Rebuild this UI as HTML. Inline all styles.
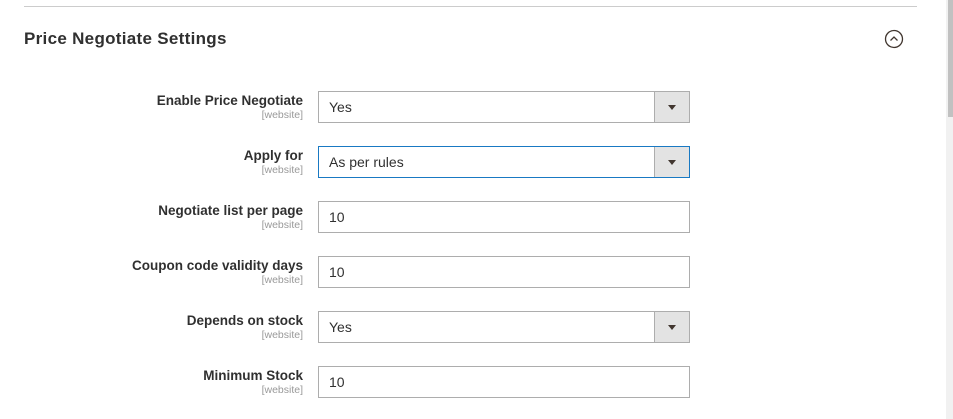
<!DOCTYPE html><html><head><style>
body{margin:0;width:953px;height:419px;background:#fff;font-family:"Liberation Sans",sans-serif;position:relative;overflow:hidden}
.hr{position:absolute;left:24px;top:6px;width:893px;height:1px;background:#ccc}
.sb{position:absolute;left:946px;top:0;width:7px;height:419px;background:#f1f1f1}
.th{position:absolute;left:948px;top:0;width:5px;height:117px;background:#c1c1c1}
h2{position:absolute;left:24px;top:29px;margin:0;font-size:17px;font-weight:bold;color:#303030;letter-spacing:.3px}
.lab{position:absolute;right:650px;text-align:right;color:#303030;font-size:13.5px;font-weight:bold}
.lab small{display:block;font-size:10.5px;color:#999;font-weight:normal;margin-top:1px}
.f{position:absolute;left:318px;height:30px;border:1px solid #adadad;font-size:14px;color:#303030;line-height:30px;padding-left:10px;width:360px}
.f.sel .btn{position:absolute;right:0;top:0;width:34px;height:30px;background:#e3e3e3;border-left:1px solid #adadad}
.btn:after{content:"";position:absolute;left:13px;top:13px;border-left:4px solid transparent;border-right:4px solid transparent;border-top:5px solid #41362f}
.foc{border-color:#1979c3}
</style></head><body>
<div class="hr"></div><div class="sb"></div><div class="th"></div>
<h2>Price Negotiate Settings</h2>
<svg style="position:absolute;left:884px;top:29px" width="20" height="20"><circle cx="10" cy="10" r="8.5" fill="none" stroke="#41362f" stroke-width="1.3"/><path d="M6.5 11.5L10 8L13.5 11.5" fill="none" stroke="#41362f" stroke-width="1.3"/></svg>
<div class="lab" style="top:93px">Enable Price Negotiate<small>[website]</small></div>
<div class="f sel" style="top:91px">Yes<div class="btn"></div></div>
<div class="lab" style="top:148px">Apply for<small>[website]</small></div>
<div class="f sel foc" style="top:146px">As per rules<div class="btn"></div></div>
<div class="lab" style="top:203px">Negotiate list per page<small>[website]</small></div>
<div class="f" style="top:201px">10</div>
<div class="lab" style="top:258px">Coupon code validity days<small>[website]</small></div>
<div class="f" style="top:256px">10</div>
<div class="lab" style="top:313px">Depends on stock<small>[website]</small></div>
<div class="f sel" style="top:311px">Yes<div class="btn"></div></div>
<div class="lab" style="top:368px">Minimum Stock<small>[website]</small></div>
<div class="f" style="top:366px">10</div>
</body></html>
